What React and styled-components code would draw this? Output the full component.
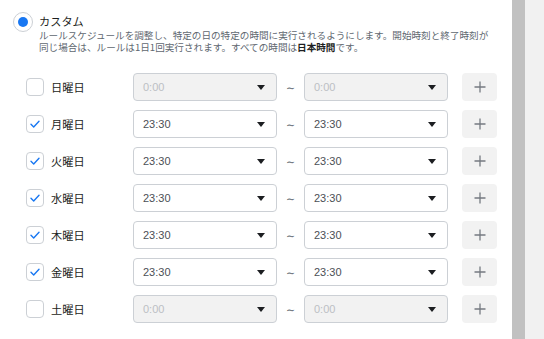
import React from 'react';
import styled, { createGlobalStyle } from 'styled-components';

const Global = createGlobalStyle`
  html, body { margin: 0; padding: 0; background: #fff; }
  body {
    font-family: "Noto Sans CJK JP", "Liberation Sans", sans-serif;
    color: #1c1e21;
  }
`;

const Page = styled.div`
  display: flex;
  width: 544px;
  height: 339px;
  overflow: hidden;
`;

const Panel = styled.div`
  width: 512px;
  padding: 12px 0 0 13px;
  box-sizing: border-box;
`;

const ScrollThumb = styled.div`
  width: 13px;
  background: #c1c1c1;
`;

const Side = styled.div`
  flex: 1;
  background: #f1f1f1;
`;

const Header = styled.div`
  display: flex;
  align-items: flex-start;
  gap: 6px;
`;

const Radio = styled.span`
  width: 20px;
  height: 20px;
  box-sizing: border-box;
  border: 1px solid #ccd0d5;
  border-radius: 50%;
  display: flex;
  align-items: center;
  justify-content: center;
  flex-shrink: 0;
  &::after {
    content: "";
    width: 10px;
    height: 10px;
    border-radius: 50%;
    background: #1877f2;
  }
`;

const HeaderText = styled.div`
  padding-top: 1px;
`;

const Title = styled.div`
  font-size: 11.2px;
  line-height: 16px;
  color: #1c1e21;
`;

const DescLine = styled.div`
  font-size: 9.6px;
  line-height: 12px;
  height: 12px;
  color: #606770;
  white-space: nowrap;
  b { color: #1c1e21; font-weight: 700; }
`;

const Rows = styled.div`
  margin-top: 20px;
  padding-left: 13px;
  display: flex;
  flex-direction: column;
  gap: 9px;
`;

const Row = styled.div`
  display: flex;
  align-items: center;
  height: 28px;
`;

const Check = styled.span`
  width: 18px;
  height: 18px;
  box-sizing: border-box;
  border: 1px solid #ccd0d5;
  border-radius: 4px;
  background: #fff;
  margin-right: 7px;
  display: flex;
  align-items: center;
  justify-content: center;
  flex-shrink: 0;
`;

const Label = styled.span`
  width: 82px;
  font-size: 11.2px;
  line-height: 16px;
  color: #1c1e21;
`;

const Select = styled.div`
  width: 144px;
  height: 28px;
  box-sizing: border-box;
  border: 1px solid #ccd0d5;
  border-radius: 4px;
  background: ${p => (p.disabled ? '#f2f2f2' : '#fff')};
  color: ${p => (p.disabled ? '#bcc0c4' : '#4b4f56')};
  font-family: "Liberation Sans", Arial, sans-serif;
  font-size: 11px;
  padding: 0 11px 0 9px;
  display: flex;
  align-items: center;
  justify-content: space-between;
  &::after {
    content: "";
    width: 0;
    height: 0;
    border-left: 4px solid transparent;
    border-right: 4px solid transparent;
    border-top: 5px solid #1c1e21;
  }
`;

const Tilde = styled.span`
  width: 27px;
  padding-top: 3px;
  text-align: center;
  font-family: "DejaVu Sans", sans-serif;
  font-size: 11px;
  line-height: 16px;
  color: #606770;
`;

const PlusButton = styled.button`
  margin-left: 14px;
  width: 35px;
  height: 28px;
  border: none;
  border-radius: 4px;
  background: #f2f2f2;
  padding: 0;
  display: flex;
  align-items: center;
  justify-content: center;
`;

const days = [
  { name: '日曜日', on: false },
  { name: '月曜日', on: true },
  { name: '火曜日', on: true },
  { name: '水曜日', on: true },
  { name: '木曜日', on: true },
  { name: '金曜日', on: true },
  { name: '土曜日', on: false },
];

function CheckMark() {
  return (
    <svg width="12" height="12" viewBox="0 0 12 12">
      <path d="M2 6.3 L4.7 8.9 L10 3.3" fill="none" stroke="#1877f2" strokeWidth="1.4" strokeLinecap="round" strokeLinejoin="round" />
    </svg>
  );
}

function Plus() {
  return (
    <svg width="12" height="12" viewBox="0 0 12 12">
      <path d="M6 0.5 V11.5 M0.5 6 H11.5" stroke="#757a81" strokeWidth="1.3" />
    </svg>
  );
}

function DayRow({ name, on }) {
  const value = on ? '23:30' : '0:00';
  return (
    <Row>
      <Check>{on && <CheckMark />}</Check>
      <Label>{name}</Label>
      <Select disabled={!on}>{value}</Select>
      <Tilde>∼</Tilde>
      <Select disabled={!on}>{value}</Select>
      <PlusButton><Plus /></PlusButton>
    </Row>
  );
}

export default function App() {
  return (
    <Page>
      <Global />
      <Panel>
        <Header>
          <Radio />
          <HeaderText>
            <Title>カスタム</Title>
            <DescLine>ルールスケジュールを調整し、特定の日の特定の時間に実行されるようにします。開始時刻と終了時刻が</DescLine>
            <DescLine>同じ場合は、ルールは1日1回実行されます。すべての時間は<b>日本時間</b>です。</DescLine>
          </HeaderText>
        </Header>
        <Rows>
          {days.map(d => <DayRow key={d.name} {...d} />)}
        </Rows>
      </Panel>
      <ScrollThumb />
      <Side />
    </Page>
  );
}
